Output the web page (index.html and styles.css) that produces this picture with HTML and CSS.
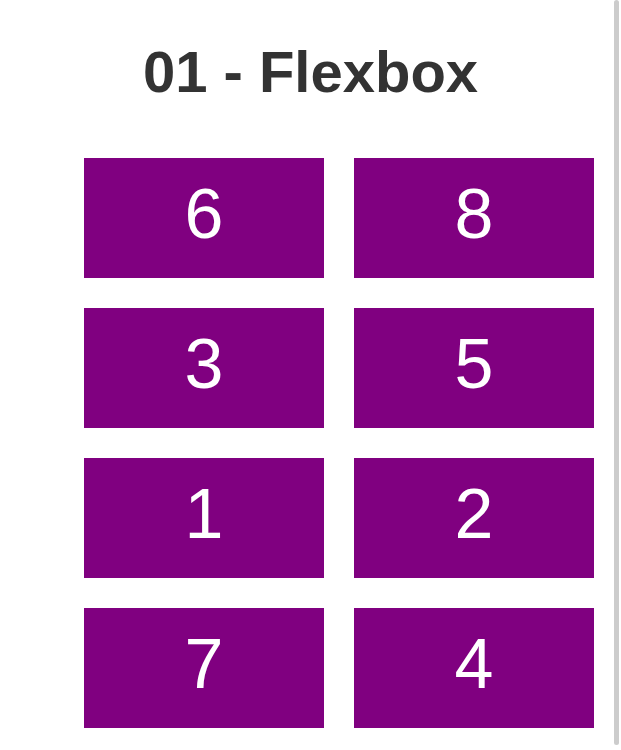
FILE: index.html
```html
<!DOCTYPE html>
<html lang="en">
<head>
<meta charset="utf-8">
<title>01 - Flexbox</title>
<link rel="stylesheet" href="styles.css">
</head>
<body>
<main class="page">
<h1 class="title">01 - Flexbox</h1>
<ul class="boxes">
<li class="box">6</li>
<li class="box">8</li>
<li class="box">3</li>
<li class="box">5</li>
<li class="box">1</li>
<li class="box">2</li>
<li class="box">7</li>
<li class="box">4</li>
</ul>
</main>
<div class="scroll-thumb" aria-hidden="true"></div>
</body>
</html>
```
FILE: styles.css
```css
* {
  box-sizing: border-box;
}

body {
  margin: 0;
  background: #fff;
  color: #333;
  font-family: Arial, "Liberation Sans", sans-serif;
}

.page {
  padding: 32px 12px 22px;
}

.title {
  margin: 0;
  font-size: 58px;
  line-height: 80px;
  text-align: center;
}

.boxes {
  display: flex;
  flex-wrap: wrap;
  justify-content: flex-end;
  gap: 30px;
  margin: 46px 0 0;
  padding: 0 15px 0 0;
  list-style: none;
}

.box {
  width: 240px;
  height: 120px;
  background: purple;
  color: #fff;
  font-size: 70px;
  line-height: 112px;
  text-align: center;
}

/* Slim scroll indicator along the right edge */
.scroll-thumb {
  position: fixed;
  top: 0;
  right: 2px;
  bottom: 5px;
  width: 5px;
  border-radius: 3px;
  background: #ccc;
}
```
